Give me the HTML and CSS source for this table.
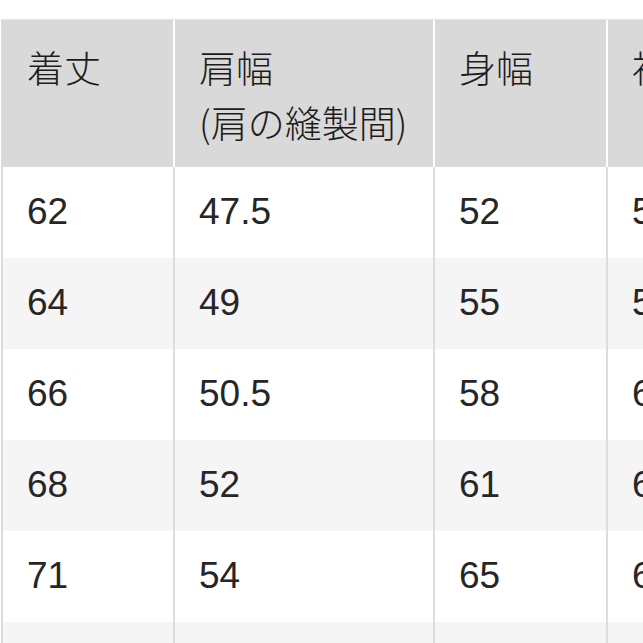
FILE: index.html
```html
<!DOCTYPE html>
<html lang="ja">
<head>
<meta charset="utf-8">
<title>サイズ表</title>
<link rel="stylesheet" href="styles.css">
</head>
<body>
<div class="frame">
  <div class="table">
    <div class="row head">
      <div class="cell">着丈</div>
      <div class="cell">肩幅<br>(肩の縫製間)</div>
      <div class="cell">身幅</div>
      <div class="cell">袖丈</div>
    </div>
    <div class="row">
      <div class="cell">62</div><div class="cell">47.5</div><div class="cell">52</div><div class="cell">58</div>
    </div>
    <div class="row alt">
      <div class="cell">64</div><div class="cell">49</div><div class="cell">55</div><div class="cell">59</div>
    </div>
    <div class="row">
      <div class="cell">66</div><div class="cell">50.5</div><div class="cell">58</div><div class="cell">60</div>
    </div>
    <div class="row alt">
      <div class="cell">68</div><div class="cell">52</div><div class="cell">61</div><div class="cell">61</div>
    </div>
    <div class="row">
      <div class="cell">71</div><div class="cell">54</div><div class="cell">65</div><div class="cell">62</div>
    </div>
    <div class="row alt">
      <div class="cell">74</div><div class="cell">56</div><div class="cell">69</div><div class="cell">63</div>
    </div>
  </div>
</div>
</body>
</html>
```

FILE: styles.css
```css
html, body {
  margin: 0;
  padding: 0;
  background: #ffffff;
  overflow: hidden;
}

.frame {
  height: 641px;
  width: 643px;
  overflow: hidden;
  border-bottom: 2px solid #cfcfcf;
  padding-top: 19px;
  box-sizing: content-box;
}

.table {
  margin-left: 1px;
  border-left: 2px solid #dcdcdc;
  width: 900px;
  font-family: "Liberation Sans", "Noto Sans CJK JP", sans-serif;
  font-size: 37px;
  color: #262626;
}

.row {
  display: grid;
  grid-template-columns: 172px 260px 173px 240px;
  height: 91px;
  background: #ffffff;
}

.row.alt {
  background: #f5f5f5;
}

.cell {
  border-right: 2px solid #dddddd;
  padding-left: 24px;
  display: flex;
  align-items: center;
  line-height: 1.2;
  white-space: nowrap;
}

.row.head {
  height: 147px;
  background: #ffffff;
  border-top: 1px solid #e6e6e6;
}

.row.head .cell {
  background: #d9d9d9;
  border-right: 2px solid #ffffff;
  display: block;
  padding-top: 20px;
  line-height: 55px;
  font-family: "Noto Sans CJK JP", "Liberation Sans", sans-serif;
  font-weight: 300;
  color: #1c1c1c;
}
```
